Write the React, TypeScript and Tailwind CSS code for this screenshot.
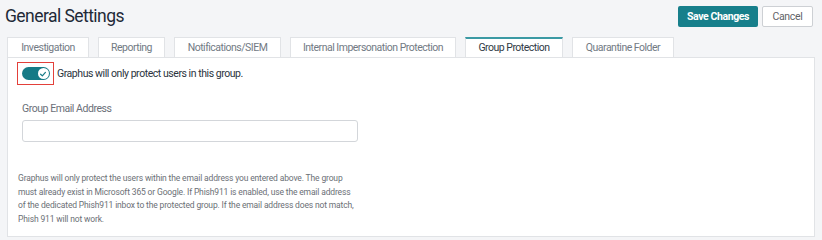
import React from "react";

const tabs = [
  { label: "Investigation", width: "w-[82px]" },
  { label: "Reporting", width: "w-[67px]" },
  { label: "Notifications/SIEM", width: "w-[107px]" },
  { label: "Internal Impersonation Protection", width: "w-[166px]" },
  { label: "Group Protection", width: "w-[98px]", active: true },
  { label: "Quarantine Folder", width: "w-[102px]" },
];

const Toggle: React.FC = () => (
  <div className="w-[37px] h-[23px] border-[1.5px] border-[#e3403a] flex items-center justify-center">
    <div className="relative w-[28px] h-[13px] rounded-full bg-[#167a86]">
      <div className="absolute right-[1px] top-[1px] w-[11px] h-[11px] rounded-full bg-white flex items-center justify-center">
        <svg width="8" height="8" viewBox="0 0 10 10" fill="none">
          <path d="M2 5.3 L4.2 7.4 L8 3" stroke="#167a86" strokeWidth="1.5" strokeLinecap="round" strokeLinejoin="round" />
        </svg>
      </div>
    </div>
  </div>
);

export default function App() {
  return (
    <div className="w-[822px] h-[240px] bg-[#f4f5f7] font-['Roboto',sans-serif] overflow-hidden">
      {/* Header */}
      <div className="flex justify-between items-start pl-[5px] pr-[9px] pt-[4px]">
        <h1 className="text-[17.5px] leading-[24px] tracking-[-0.55px] text-[#1f2a37]">General Settings</h1>
        <div className="flex gap-[4px] mt-[2px]">
          <button className="w-[80px] h-[21px] rounded-[2px] bg-[#177f8b] text-white text-[10.5px] tracking-[-0.4px] font-bold">
            Save Changes
          </button>
          <button className="w-[51px] h-[21px] rounded-[2px] bg-white border border-[#cdd0d4] text-[#5f6368] text-[10.5px] tracking-[-0.3px]">
            Cancel
          </button>
        </div>
      </div>

      {/* Tabs */}
      <div className="flex gap-[9px] pl-[7px] mt-[9px]">
        {tabs.map((t) => (
          <div
            key={t.label}
            className={`${t.width} h-[20px] flex items-center justify-center whitespace-nowrap text-[10.5px] tracking-[-0.5px] border-x border-[#e1e3e6] ${
              t.active
                ? "bg-white border-t-2 border-t-[#3b9aa4] text-[#2f3a45] -mb-px relative z-10"
                : "bg-white border-t text-[#727a84]"
            }`}
          >
            {t.label}
          </div>
        ))}
      </div>

      {/* Panel */}
      <div className="mx-[7px] w-[808px] h-[180px] bg-white border border-[#e1e3e6] pl-[9px] pt-[4px]">
        <div className="flex items-center gap-[3px]">
          <Toggle />
          <span className="text-[10.5px] tracking-[-0.45px] text-[#2b3440]">
            Graphus will only protect users in this group.
          </span>
        </div>

        <div className="pl-[5px] mt-[17px]">
          <label className="block text-[10.5px] leading-[14px] tracking-[-0.45px] text-[#6b7079]">
            Group Email Address
          </label>
          <input
            type="text"
            className="mt-[4px] w-[336px] h-[22px] border border-[#d3d6da] rounded-[3px] outline-none"
          />
        </div>

        <p className="ml-[1px] mt-[29px] whitespace-nowrap text-[8.5px] leading-[13.7px] tracking-[-0.15px] text-[#6b6f76]">
          Graphus will only protect the users within the email address you entered above. The group
          <br />
          must already exist in Microsoft 365 or Google. If Phish911 is enabled, use the email address
          <br />
          of the dedicated Phish911 inbox to the protected group. If the email address does not match,
          <br />
          Phish 911 will not work.
        </p>
      </div>
    </div>
  );
}
